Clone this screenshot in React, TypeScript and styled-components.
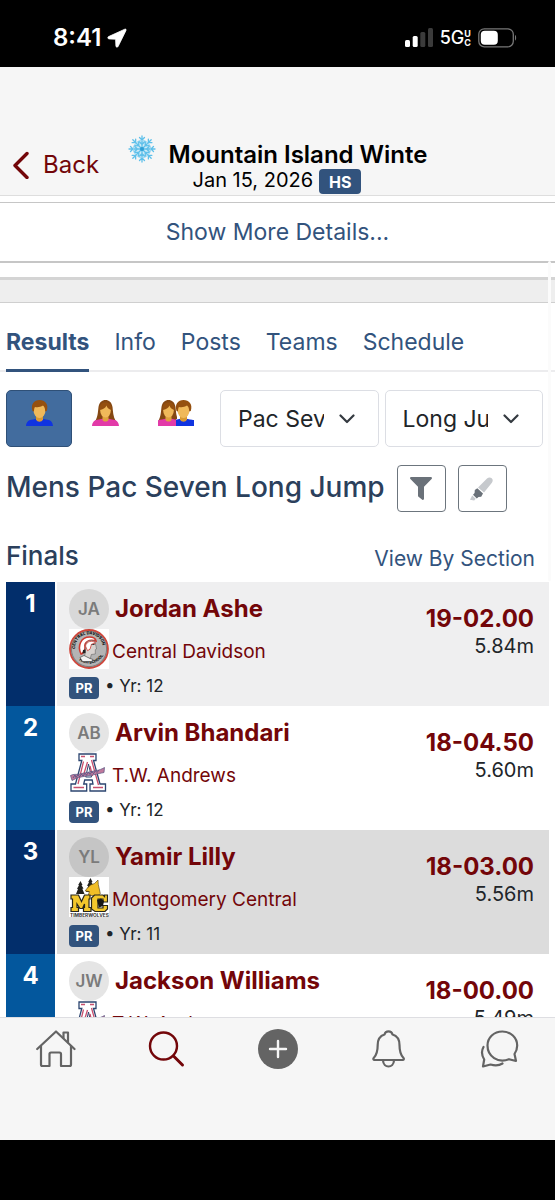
import React from "react";
import styled, { createGlobalStyle } from "styled-components";

const GlobalStyle = createGlobalStyle`
  *, *::before, *::after { box-sizing: border-box; }
  body {
    margin: 0;
    background: #000;
    color: #212529;
    font-family: Inter, "Liberation Sans", sans-serif;
  }
  button, select { font: inherit; color: inherit; }
  a { text-decoration: none; color: inherit; }
  svg { display: block; flex: none; }
`;

const navy = "#32537d";
const maroon = "#730609";

const Screen = styled.div`
  display: flex;
  flex-direction: column;
  height: 100vh;
`;

/* Status bar */
const StatusBar = styled.div`
  display: flex;
  flex: none;
  align-items: center;
  justify-content: space-between;
  height: 67px;
  padding: 8px 38px 0 53px;
  background: #000;
  color: #fff;
`;

const StatusGroup = styled.div<{ $gap: number }>`
  display: flex;
  align-items: center;
  gap: ${(p) => p.$gap}px;
`;

const Clock = styled.span`
  font-size: 24px;
  line-height: 28px;
  font-weight: 600;
`;

const Network = styled.span`
  display: flex;
  align-items: center;
  font-size: 18px;
  line-height: 20px;
  font-weight: 500;
`;

const NetworkSuffix = styled.span`
  display: flex;
  flex-direction: column;
  font-size: 9px;
  line-height: 9px;
  font-weight: 700;
`;

/* Header */
const Header = styled.header`
  display: grid;
  flex: none;
  grid-template-columns: 1fr 300px 1fr;
  padding-top: 67px;
  background: #f6f6f6;
  border-bottom: 1px solid #dedede;
`;

const BackButton = styled.button`
  display: flex;
  align-items: center;
  align-self: start;
  gap: 14px;
  height: 60px;
  padding: 2px 0 0 12px;
  border: 0;
  background: none;
  color: ${maroon};
  font-size: 24px;
  line-height: 28px;
`;

const Meet = styled.div`
  display: flex;
  gap: 13px;
  min-width: 0;
`;

const MeetText = styled.div`
  flex: 1;
  min-width: 0;
`;

const MeetTitle = styled.h1`
  margin: 0;
  padding-top: 7px;
  overflow: hidden;
  white-space: nowrap;
  color: #000;
  font-size: 24px;
  line-height: 28px;
  font-weight: 600;
`;

const MeetMeta = styled.div`
  display: flex;
  align-items: flex-start;
  gap: 6px;
  height: 26px;
  padding-left: 24px;
  color: #000;
  font-size: 20px;
  line-height: 22px;
`;

const Badge = styled.span<{ $large?: boolean }>`
  display: flex;
  align-items: center;
  justify-content: center;
  width: ${(p) => (p.$large ? 42 : 30)}px;
  height: ${(p) => (p.$large ? 25 : 22)}px;
  border-radius: 4px;
  background: ${navy};
  color: #fff;
  font-size: ${(p) => (p.$large ? 16 : 13)}px;
  line-height: 16px;
  font-weight: 700;
`;

const SnowSlot = styled.div`
  width: 28px;
`;

/* Scrolling content */
const Main = styled.main`
  position: relative;
  flex: 1;
  min-height: 0;
  overflow: hidden;
  background: #fff;
`;

const ScrollThumb = styled.div`
  position: absolute;
  top: 65px;
  right: 4px;
  width: 3px;
  height: 320px;
  border-radius: 2px;
  background: #fbfbfb;
`;

const DetailsCard = styled.section`
  padding: 6px 0 14px;
  border-bottom: 3px solid #d4d4d4;
`;

const DetailsButton = styled.button`
  display: block;
  width: 100%;
  height: 61px;
  padding: 0;
  border: solid #c6c6c6;
  border-width: 1px 0 2px;
  background: #fff;
  color: ${navy};
  font-size: 23px;
  line-height: 28px;
`;

const Divider = styled.div`
  height: 23px;
  background: #eee;
  border-bottom: 1px solid #cfcfcf;
`;

const TabList = styled.nav`
  display: flex;
  gap: 25px;
  height: 69px;
  padding: 0 6px;
  border-bottom: 2px solid #ececee;
`;

const TabLink = styled.a<{ $active?: boolean }>`
  height: 69px;
  padding-top: 24px;
  border-bottom: ${(p) => (p.$active ? `3px solid ${navy}` : "0")};
  color: ${navy};
  font-size: 23px;
  line-height: 30px;
  font-weight: ${(p) => (p.$active ? 700 : 400)};
`;

const Filters = styled.div`
  display: flex;
  gap: 6px;
  padding: 18px 12px 18px 6px;
`;

const GenderGroup = styled.div`
  display: flex;
`;

const GenderButton = styled.button<{ $active?: boolean; $wide?: boolean }>`
  display: flex;
  justify-content: center;
  width: ${(p) => (p.$wide ? 76 : 66)}px;
  height: 57px;
  padding: 9px 0 0;
  border: 1px solid ${(p) => (p.$active ? "#2f5077" : "transparent")};
  border-radius: 5px;
  background: ${(p) => (p.$active ? "#426c9e" : "none")};
`;

const SelectWrap = styled.div`
  position: relative;
  flex: 1;
  min-width: 0;
`;

const Select = styled.select`
  width: 100%;
  height: 57px;
  padding: 0 54px 0 14px;
  border: 1px solid #dcdee4;
  border-radius: 5px;
  appearance: none;
  background: #fff;
  color: #212529;
  font-size: 23px;
  line-height: 30px;
  text-indent: 3px;
`;

const Caret = styled.svg`
  position: absolute;
  top: 24px;
  right: 24px;
  pointer-events: none;
`;

const TitleRow = styled.div`
  display: flex;
  align-items: center;
  gap: 12px;
  padding: 0 6px;
`;

const EventTitle = styled.h2`
  margin: 0;
  padding-bottom: 4px;
  white-space: nowrap;
  color: #2b405c;
  font-size: 28px;
  line-height: 34px;
  font-weight: 500;
`;

const ToolButton = styled.button`
  display: flex;
  align-items: center;
  justify-content: center;
  width: 49px;
  height: 47px;
  padding: 0;
  border: 1px solid #6c757d;
  border-radius: 4px;
  background: #fff;
`;

const RoundRow = styled.div`
  display: flex;
  align-items: center;
  justify-content: space-between;
  height: 70px;
  padding: 20px 20px 0 6px;
`;

const RoundTitle = styled.h3`
  margin: 0;
  padding-bottom: 2px;
  color: #2b405c;
  font-size: 26px;
  line-height: 32px;
  font-weight: 500;
`;

const SectionLink = styled.a`
  padding-top: 4px;
  color: ${navy};
  font-size: 21px;
  line-height: 28px;
`;

const Results = styled.table`
  width: calc(100% - 12px);
  margin: 0 6px;
  border-collapse: collapse;
`;

const ResultRow = styled.tr<{ $tone: string }>`
  height: 124px;
  background: ${(p) => p.$tone};
`;

const RankCell = styled.td<{ $alt: boolean }>`
  width: 50px;
  padding: 7px 0 0;
  background: ${(p) => (p.$alt ? "#03579d" : "#022e6b")};
  color: #fff;
  font-size: 24px;
  line-height: 30px;
  font-weight: 700;
  text-align: center;
  vertical-align: top;
`;

const AthleteCell = styled.td`
  padding: 7px 0 0 12px;
  border-left: 2px solid #fff;
  vertical-align: top;
`;

const Line = styled.div<{ $gap: number }>`
  display: flex;
  align-items: center;
  gap: ${(p) => p.$gap}px;
  height: 40px;
`;

const Avatar = styled.span<{ $tone: string }>`
  display: flex;
  flex: none;
  align-items: center;
  justify-content: center;
  width: 40px;
  height: 40px;
  border-radius: 50%;
  background: ${(p) => p.$tone};
  color: #7b7b7b;
  font-size: 17px;
  line-height: 20px;
  font-weight: 600;
`;

const AthleteLink = styled.a`
  color: ${maroon};
  font-size: 24px;
  line-height: 30px;
  font-weight: 700;
  white-space: nowrap;
`;

const TeamLink = styled.a`
  padding-top: 6px;
  color: ${maroon};
  font-size: 19px;
  line-height: 24px;
`;

const YearLine = styled.div`
  display: flex;
  align-items: center;
  gap: 6px;
  padding-top: 6px;
  font-size: 17px;
  line-height: 22px;
`;

const YearText = styled.span`
  padding-bottom: 4px;
  white-space: pre;
`;

const MarkCell = styled.td`
  padding: 22px 15px 0 0;
  text-align: right;
  vertical-align: top;
`;

const Mark = styled.a`
  display: block;
  color: ${maroon};
  font-size: 24px;
  line-height: 30px;
  font-weight: 700;
`;

const Metric = styled.div`
  font-size: 20px;
  line-height: 24px;
`;

/* Bottom navigation */
const BottomNav = styled.nav`
  display: grid;
  flex: none;
  grid-template-columns: repeat(5, 1fr);
  height: 123px;
  margin-bottom: 60px;
  padding-top: 11px;
  border-top: 1px solid #dedee2;
  background: #f6f6f6;
`;

const NavButton = styled.button`
  display: flex;
  justify-content: center;
  height: 40px;
  padding: 0;
  border: 0;
  background: none;
`;

function LocationArrow() {
  return (
    <svg width="20" height="20" viewBox="0 0 20 20" aria-hidden="true">
      <path d="M17.800 1.200 1.600 8.600c-1.200.6-1 2.200.4 2.300l6.600.3.3 6.700c.1 1.500 1.700 1.700 2.300.4L19 2.400c.4-.9-.3-1.600-1.200-1.200z" fill="#fff" stroke="#fff" strokeWidth=".8" strokeLinejoin="round" />
    </svg>
  );
}

function Signal() {
  return (
    <svg width="28" height="19" viewBox="0 0 28 19" aria-hidden="true">
      <rect x="0" y="12" width="5" height="7" rx="1.500" fill="#fff" />
      <rect x="7.700" y="8" width="5" height="11" rx="1.500" fill="#fff" />
      <rect x="15.300" y="4" width="5" height="15" rx="1.500" fill="#3b3b3b" />
      <rect x="23" y="0" width="5" height="19" rx="1.500" fill="#3b3b3b" />
    </svg>
  );
}

function Battery() {
  return (
    <svg width="39" height="20" viewBox="0 0 39 20" aria-hidden="true">
      <rect x=".8" y=".8" width="34.500" height="18" rx="5.500" fill="none" stroke="#777" strokeWidth="1.300" />
      <rect x="2.800" y="2.800" width="17" height="14" rx="4" fill="#fff" />
      <path d="M37 7c1.500.5 1.500 5 0 5.500z" fill="#777" />
    </svg>
  );
}

function Snowflake() {
  const arms = [0, 45, 90, 135, 180, 225, 270, 315];
  return (
    <svg width="28" height="30" viewBox="-14 -15 28 30" role="img" aria-label="Winter meet">
      <circle r="9" fill="#c5e9f8" opacity=".8" />
      <g fill="none" stroke="#5fc0ea" strokeWidth="1.300" strokeLinecap="round">
        {arms.map((a) => (
          <g key={a} transform={`rotate(${a})`}>
            <path d="M0 0V-13M-2.500-11.500 0-9 2.500-11.500M-2.800-7.500 0-4.500 2.800-7.500" />
          </g>
        ))}
      </g>
      <circle r="8.500" fill="none" stroke="#8fd3f1" />
      <circle r="2" fill="#2f9fd6" />
    </svg>
  );
}

function BackChevron() {
  return (
    <svg width="17" height="28" viewBox="0 0 17 28" aria-hidden="true">
      <path d="M15 2.500 3 14.500l12 12" fill="none" stroke={maroon} strokeWidth="3.400" strokeLinecap="round" strokeLinejoin="round" />
    </svg>
  );
}

function ManShape() {
  return (
    <g>
      <path d="M0 26c.3-4.200 2.600-6.300 7-6.600L13.500 18l6.500 1.400c4.400.3 6.700 2.400 7 6.600z" fill="#1034e0" />
      <path d="M10 15h7v4.500c-1.500 3-5.500 3-7 0z" fill="#d89a35" />
      <ellipse cx="13.500" cy="10.500" rx="6" ry="7.500" fill="#f0b95a" />
      <path d="M6.500 11C4.500 4 8 0 13.500 0s9.500 4 7.300 11l-1.600.5c0-3-.8-4.800-2.200-6-2.500 1.800-5.500 1.900-8 1.500-.8 1-1 2.500-1 4.500z" fill="#95500f" />
    </g>
  );
}

function WomanShape() {
  return (
    <g>
      <path d="M6.500 7C7.500 2 10 0 13.500 0s6 2 7 7c.6 5 .5 9 3.200 14H3.300C6 16 5.900 12 6.500 7z" fill="#854812" />
      <path d="M0 26c.3-4.200 2.600-6.300 7-6.600L13.500 18l6.500 1.400c4.400.3 6.700 2.400 7 6.600z" fill="#e23aa8" />
      <path d="M10.500 14h6v6c-1.500 2-4.500 2-6 0z" fill="#e0a23d" />
      <ellipse cx="13.500" cy="10.500" rx="5.300" ry="7" fill="#f0b95a" />
      <path d="M7.500 10c-.5-5 2-7.500 6-7.500s6.500 2.500 6 7.500c-3-.6-4.500-2.500-5-4.500-1 2.500-3.500 4-7 4.500z" fill="#95500f" />
    </g>
  );
}

function PersonIcon({ kind }: { kind: "man" | "woman" | "both" }) {
  if (kind === "both") {
    return (
      <svg width="36" height="27" viewBox="0 0 36 27" aria-hidden="true">
        <defs>
          <clipPath id="pair-left">
            <path d="M0 0h19v19h-1v7H0z" />
          </clipPath>
          <clipPath id="pair-right">
            <path d="M15 0h21v26H18v-7h-3z" />
          </clipPath>
        </defs>
        <g clipPath="url(#pair-right)">
          <path d="M18 20h18v6H18z" fill="#1034e0" />
          <g transform="translate(12 0)"><ManShape /></g>
        </g>
        <g clipPath="url(#pair-left)">
          <path d="M0 21h18v5H0z" fill="#e23aa8" />
          <g transform="translate(-3 0)"><WomanShape /></g>
        </g>
      </svg>
    );
  }
  return (
    <svg width="27" height="27" viewBox="0 0 27 27" aria-hidden="true">
      {kind === "man" ? <ManShape /> : <WomanShape />}
    </svg>
  );
}

function SelectCaret() {
  return (
    <Caret width="16" height="10" viewBox="0 0 16 10" aria-hidden="true">
      <path d="m1.500 1.500 6.500 6.500 6.500-6.500" fill="none" stroke="#343a40" strokeWidth="2.200" strokeLinecap="round" strokeLinejoin="round" />
    </Caret>
  );
}

function FunnelIcon() {
  return (
    <svg width="22" height="23" viewBox="0 0 22 23" aria-hidden="true">
      <path d="M1.200 0h19.600c1 0 1.500 1.200.8 1.900L14 9.700v12c0 1-.9 1.500-1.700 1l-3.500-2.600c-.5-.4-.8-.8-.8-1.400v-9L.4 1.900C-.3 1.200.2 0 1.200 0z" fill="#6a7179" />
    </svg>
  );
}

function HighlighterIcon() {
  return (
    <svg width="24" height="24" viewBox="0 0 24 24" aria-hidden="true">
      <path d="m8 10.500 9-8.900c1.500-1.500 3.500-1.500 4.700-.3 1.400 1.300 1.300 3.300 0 4.800L14 15.500z" fill="#c6c9cd" />
      <path d="m7.300 11.300 5.700 5.200-1.800 3.200-2.700.2-1.700 1.600-3.800-3.700 1.600-1.800.2-2.900z" fill="#6a7179" />
      <path d="m2.200 18.600 3.500 3.200L4.200 23.500 0 22.700z" fill="#c6c9cd" />
    </svg>
  );
}

function DavidsonLogo() {
  return (
    <svg width="40" height="40" viewBox="0 0 40 40" role="img" aria-label="Central Davidson logo">
      <defs>
        <path id="cd-top" d="M6.500 23A14 14 0 1 1 33.500 23" />
        <path id="cd-bottom" d="M5 25A16.500 16.500 0 0 0 35 25" />
      </defs>
      <path d="M0 0h40v40H0z" fill="#fff" />
      <circle cx="20" cy="20" r="19" fill="#b4b4b4" stroke="#ce463b" strokeWidth="1.800" />
      <circle cx="20" cy="20" r="17.600" fill="none" stroke="#555" strokeWidth=".6" />
      <g fill="#111" fontFamily="Inter, sans-serif" fontWeight="800" fontSize="4">
        <text><textPath href="#cd-top" startOffset="3">CENTRAL DAVIDSON</textPath></text>
        <text><textPath href="#cd-bottom" startOffset="8">HIGH SCHOOL</textPath></text>
      </g>
      <path d="M12 25C8 17 12 8 20.500 8c4 0 6 1.500 6.500 4-7-2-12 1-11 6 .3 3-.5 5-3.500 7z" fill="#fff" stroke="#cf3a31" strokeWidth="1.600" />
      <path d="M16.500 17c0-5 5-6.500 9-5l1.500 5 .5 3-1.200.7V25l-4 .5-1 4-6-1 1-5z" fill="#d7d2cf" stroke="#555" strokeWidth=".5" />
      <path d="M16.500 17c1-5 7-6 10-3l-4 1.200-1.500 5-2.500 1.500z" fill="#fff" stroke="#cf3a31" strokeWidth=".8" />
      <path d="M14 21l2.500-.5v3.500l-3 .5zM21.500 15.500l4-.8v1.200z" fill="#222" />
      <path d="M11 28.500l4-2 6 3 3 1-1.500 2h-9z" fill="#f4f4f4" stroke="#333" strokeWidth=".6" />
    </svg>
  );
}

function AndrewsLogo() {
  return (
    <svg width="40" height="40" viewBox="0 0 40 40" role="img" aria-label="T.W. Andrews logo">
      <g strokeLinejoin="miter">
        <path d="M10 1h17v6.500h-2.500L31 31h5.500v7H21v-7h3l-.8-4h-7.500l-1 4h3v7H2v-7h4.500L12.800 7.500H10z" fill="#fff" stroke="#2c4570" strokeWidth="1.300" />
        <path d="M16.700 24h5.800L19.500 11z" fill="#fff" stroke="#2c4570" />
        <path d="M12 3.500h4M21 3.500h4M14.500 8.500 9 31M22.500 7l7 25M18.500 9 14.500 22M21 13l2.500 10M4.500 34.500h10.500M24 34.500h10" fill="none" stroke="#c8506e" strokeWidth="1.300" />
      </g>
      <path d="M1.500 22.500c3-2 6-.5 9-1.500l17-3.500c3-.6 5-1.300 8-3l-.5 5c-4 1-6 1-9 2L9 24.500l-6 3z" fill="#c0799c" stroke="#53537f" strokeWidth=".7" />
      <path d="m4 25 2-3 1 2.500 2-3 1.500 2.300 2-2.800 1.500 2 2-2.800 1.500 2 2-2.800 1.500 2 2-2.800 1.500 2 2-2.800 1.500 1.700 2-2.500" fill="none" stroke="#495181" strokeWidth=".8" />
    </svg>
  );
}

function MontgomeryLogo() {
  return (
    <svg width="40" height="40" viewBox="0 0 40 40" role="img" aria-label="Montgomery Central logo">
      <path d="M0 0h40v40H0z" fill="#fff" />
      <path d="m11.500 4 2 4-1 .2 2 3.300-1.200.2 2.200 5.300H7l2-5-1-.3 2-3.500-.8-.2zM21.500 1l2 4-1 .2 2 3.500-1 .2 1.500 6H17l2.200-6-1.200-.2 2-3.500-.8-.2z" fill="#20201d" />
      <path d="m17.500 12 4-4 4-1.500 3.500-3.500.3 4.500 2 9-2 2h-10l1-4-4-.5z" fill="#f1be27" stroke="#4d3b10" strokeWidth=".6" />
      <g fill="#f3c72c" stroke="#28261b" strokeWidth="1.200">
        <path d="M2 18h7.500l3 6.500 3-6.500H21v4h-1v8.500h2v4h-7.500v-4h1V27l-2 4.500h-2.500L8 27v3.500h1.500v4H2v-4h1.500V22H2z" />
        <path d="M25.500 18H34l1.500 1.500V18h3v7H34v-3h-5v9h5v-2.500h4.500V32L36 34.500H26L22.500 32V21z" />
      </g>
      <path d="m28 23 4-1.500 3 2.500-1 5-4 1.500z" fill="#171717" />
      <text x="1" y="39.500" fill="#333" fontFamily="Inter, sans-serif" fontSize="4.800" fontWeight="700">TIMBERWOLVES</text>
    </svg>
  );
}

const iconStroke = {
  fill: "none",
  stroke: "#646464",
  strokeWidth: 2.2,
  strokeLinecap: "round" as const,
  strokeLinejoin: "round" as const,
};

function HomeIcon() {
  return (
    <svg width="40" height="40" viewBox="0 0 40 40" aria-hidden="true">
      <g {...iconStroke}>
        <path d="M1.200 20 20 2.500 38.500 20" />
        <path d="M5 17v18.500c0 1 .5 1.500 1.500 1.500h7V25c0-1 .5-1.500 1.500-1.500h8.500c1 0 1.500.5 1.500 1.500v12h8.500c1 0 1.500-.5 1.500-1.500V17" />
        <path d="M27.500 9V3.500h4.500V13.500" />
      </g>
    </svg>
  );
}

function SearchIcon() {
  return (
    <svg width="40" height="40" viewBox="0 0 40 40" aria-hidden="true">
      <g {...iconStroke} stroke={maroon} strokeWidth={2.4}>
        <circle cx="16.500" cy="17" r="13.500" />
        <path d="m26.500 27 9 9" strokeWidth="3" />
      </g>
    </svg>
  );
}

function AddIcon() {
  return (
    <svg width="40" height="40" viewBox="0 0 40 40" aria-hidden="true">
      <circle cx="20" cy="20" r="20" fill="#646464" />
      <path d="M20 12v16M12 20h16" stroke="#f6f6f6" strokeWidth="2.400" strokeLinecap="round" />
    </svg>
  );
}

function BellIcon() {
  return (
    <svg width="40" height="40" viewBox="0 0 40 40" aria-hidden="true">
      <g {...iconStroke}>
        <path d="M15.500 5.500c1-4.300 7-4.300 8 0 5 1.500 7 5.500 7 10.500 0 7 1 10 4 13 .8 1 .3 2-.8 2H5.500c-1.100 0-1.600-1-.8-2 3-3 4-6 4-13 0-5 2-9 6.800-10.500z" />
        <path d="M14 31.500c.5 8 10.500 8 11 0" />
      </g>
    </svg>
  );
}

function ChatIcon() {
  return (
    <svg width="40" height="40" viewBox="0 0 40 40" aria-hidden="true">
      <g {...iconStroke}>
        <path d="M34.500 25l1.500 7-7-1.800C18 34.500 7.500 27.500 7.500 16.500 7.500 8.500 14 2.500 22.300 2.500S37.200 8.500 37.200 16.500c0 3.500-1 6-2.700 8.500z" />
        <path d="M3.500 18c-2.300 4-2 8 .7 12.500L3 37.500l7.500-2c4 1.200 8.500 1.200 12-1" />
      </g>
    </svg>
  );
}

const logos = {
  davidson: DavidsonLogo,
  andrews: AndrewsLogo,
  montgomery: MontgomeryLogo,
};

interface Result {
  initials: string;
  name: string;
  team: string;
  logo: keyof typeof logos;
  year: string;
  mark: string;
  metric: string;
  tone: string;
  avatar: string;
}

const results: Result[] = [
  { initials: "JA", name: "Jordan Ashe", team: "Central Davidson", logo: "davidson", year: "12", mark: "19-02.00", metric: "5.84m", tone: "#efeff0", avatar: "#d8d8d8" },
  { initials: "AB", name: "Arvin Bhandari", team: "T.W. Andrews", logo: "andrews", year: "12", mark: "18-04.50", metric: "5.60m", tone: "#fff", avatar: "#e5e5e5" },
  { initials: "YL", name: "Yamir Lilly", team: "Montgomery Central", logo: "montgomery", year: "11", mark: "18-03.00", metric: "5.56m", tone: "#dcdcdc", avatar: "#c5c5c5" },
  { initials: "JW", name: "Jackson Williams", team: "T.W. Andrews", logo: "andrews", year: "12", mark: "18-00.00", metric: "5.49m", tone: "#fff", avatar: "#e5e5e5" },
];

const tabs = ["Results", "Info", "Posts", "Teams", "Schedule"];

function ResultEntry({ result, rank }: { result: Result; rank: number }) {
  const Logo = logos[result.logo];
  return (
    <ResultRow $tone={result.tone}>
      <RankCell $alt={rank % 2 === 0}>{rank}</RankCell>
      <AthleteCell>
        <Line $gap={6}>
          <Avatar $tone={result.avatar}>{result.initials}</Avatar>
          <AthleteLink href="#athlete">{result.name}</AthleteLink>
        </Line>
        <Line $gap={3}>
          <Logo />
          <TeamLink href="#team">{result.team}</TeamLink>
        </Line>
        <YearLine>
          <Badge>PR</Badge>
          <YearText>• Yr: {result.year}</YearText>
        </YearLine>
      </AthleteCell>
      <MarkCell>
        <Mark href="#mark">{result.mark}</Mark>
        <Metric>{result.metric}</Metric>
      </MarkCell>
    </ResultRow>
  );
}

export default function App() {
  return (
    <>
      <GlobalStyle />
      <Screen>
        <StatusBar>
          <StatusGroup $gap={6}>
            <Clock>8:41</Clock>
            <LocationArrow />
          </StatusGroup>
          <StatusGroup $gap={7}>
            <Signal />
            <Network>
              5G
              <NetworkSuffix>
                <span>U</span>
                <span>C</span>
              </NetworkSuffix>
            </Network>
            <Battery />
          </StatusGroup>
        </StatusBar>

        <Header>
          <BackButton type="button">
            <BackChevron />
            Back
          </BackButton>
          <Meet>
            <SnowSlot>
              <Snowflake />
            </SnowSlot>
            <MeetText>
              <MeetTitle>Mountain Island Winter</MeetTitle>
              <MeetMeta>
                Jan 15, 2026
                <Badge $large>HS</Badge>
              </MeetMeta>
            </MeetText>
          </Meet>
        </Header>

        <Main>
          <DetailsCard>
            <DetailsButton type="button">Show More Details...</DetailsButton>
          </DetailsCard>
          <Divider />
          <TabList>
            {tabs.map((tab, i) => (
              <TabLink key={tab} href={`#${tab.toLowerCase()}`} $active={i === 0}>
                {tab}
              </TabLink>
            ))}
          </TabList>
          <Filters>
            <GenderGroup>
              <GenderButton type="button" aria-label="Men" $active>
                <PersonIcon kind="man" />
              </GenderButton>
              <GenderButton type="button" aria-label="Women">
                <PersonIcon kind="woman" />
              </GenderButton>
              <GenderButton type="button" aria-label="All" $wide>
                <PersonIcon kind="both" />
              </GenderButton>
            </GenderGroup>
            <SelectWrap>
              <Select aria-label="Division" defaultValue="pac">
                <option value="pac">Pac Seven</option>
              </Select>
              <SelectCaret />
            </SelectWrap>
            <SelectWrap>
              <Select aria-label="Event" defaultValue="lj">
                <option value="lj">Long Jump</option>
              </Select>
              <SelectCaret />
            </SelectWrap>
          </Filters>
          <TitleRow>
            <EventTitle>Mens Pac Seven Long Jump</EventTitle>
            <ToolButton type="button" aria-label="Filter">
              <FunnelIcon />
            </ToolButton>
            <ToolButton type="button" aria-label="Highlight">
              <HighlighterIcon />
            </ToolButton>
          </TitleRow>
          <RoundRow>
            <RoundTitle>Finals</RoundTitle>
            <SectionLink href="#sections">View By Section</SectionLink>
          </RoundRow>
          <Results>
            <tbody>
              {results.map((result, i) => (
                <ResultEntry key={result.name} result={result} rank={i + 1} />
              ))}
            </tbody>
          </Results>
          <ScrollThumb />
        </Main>

        <BottomNav>
          <NavButton type="button" aria-label="Home"><HomeIcon /></NavButton>
          <NavButton type="button" aria-label="Search"><SearchIcon /></NavButton>
          <NavButton type="button" aria-label="Add"><AddIcon /></NavButton>
          <NavButton type="button" aria-label="Notifications"><BellIcon /></NavButton>
          <NavButton type="button" aria-label="Messages"><ChatIcon /></NavButton>
        </BottomNav>
      </Screen>
    </>
  );
}
